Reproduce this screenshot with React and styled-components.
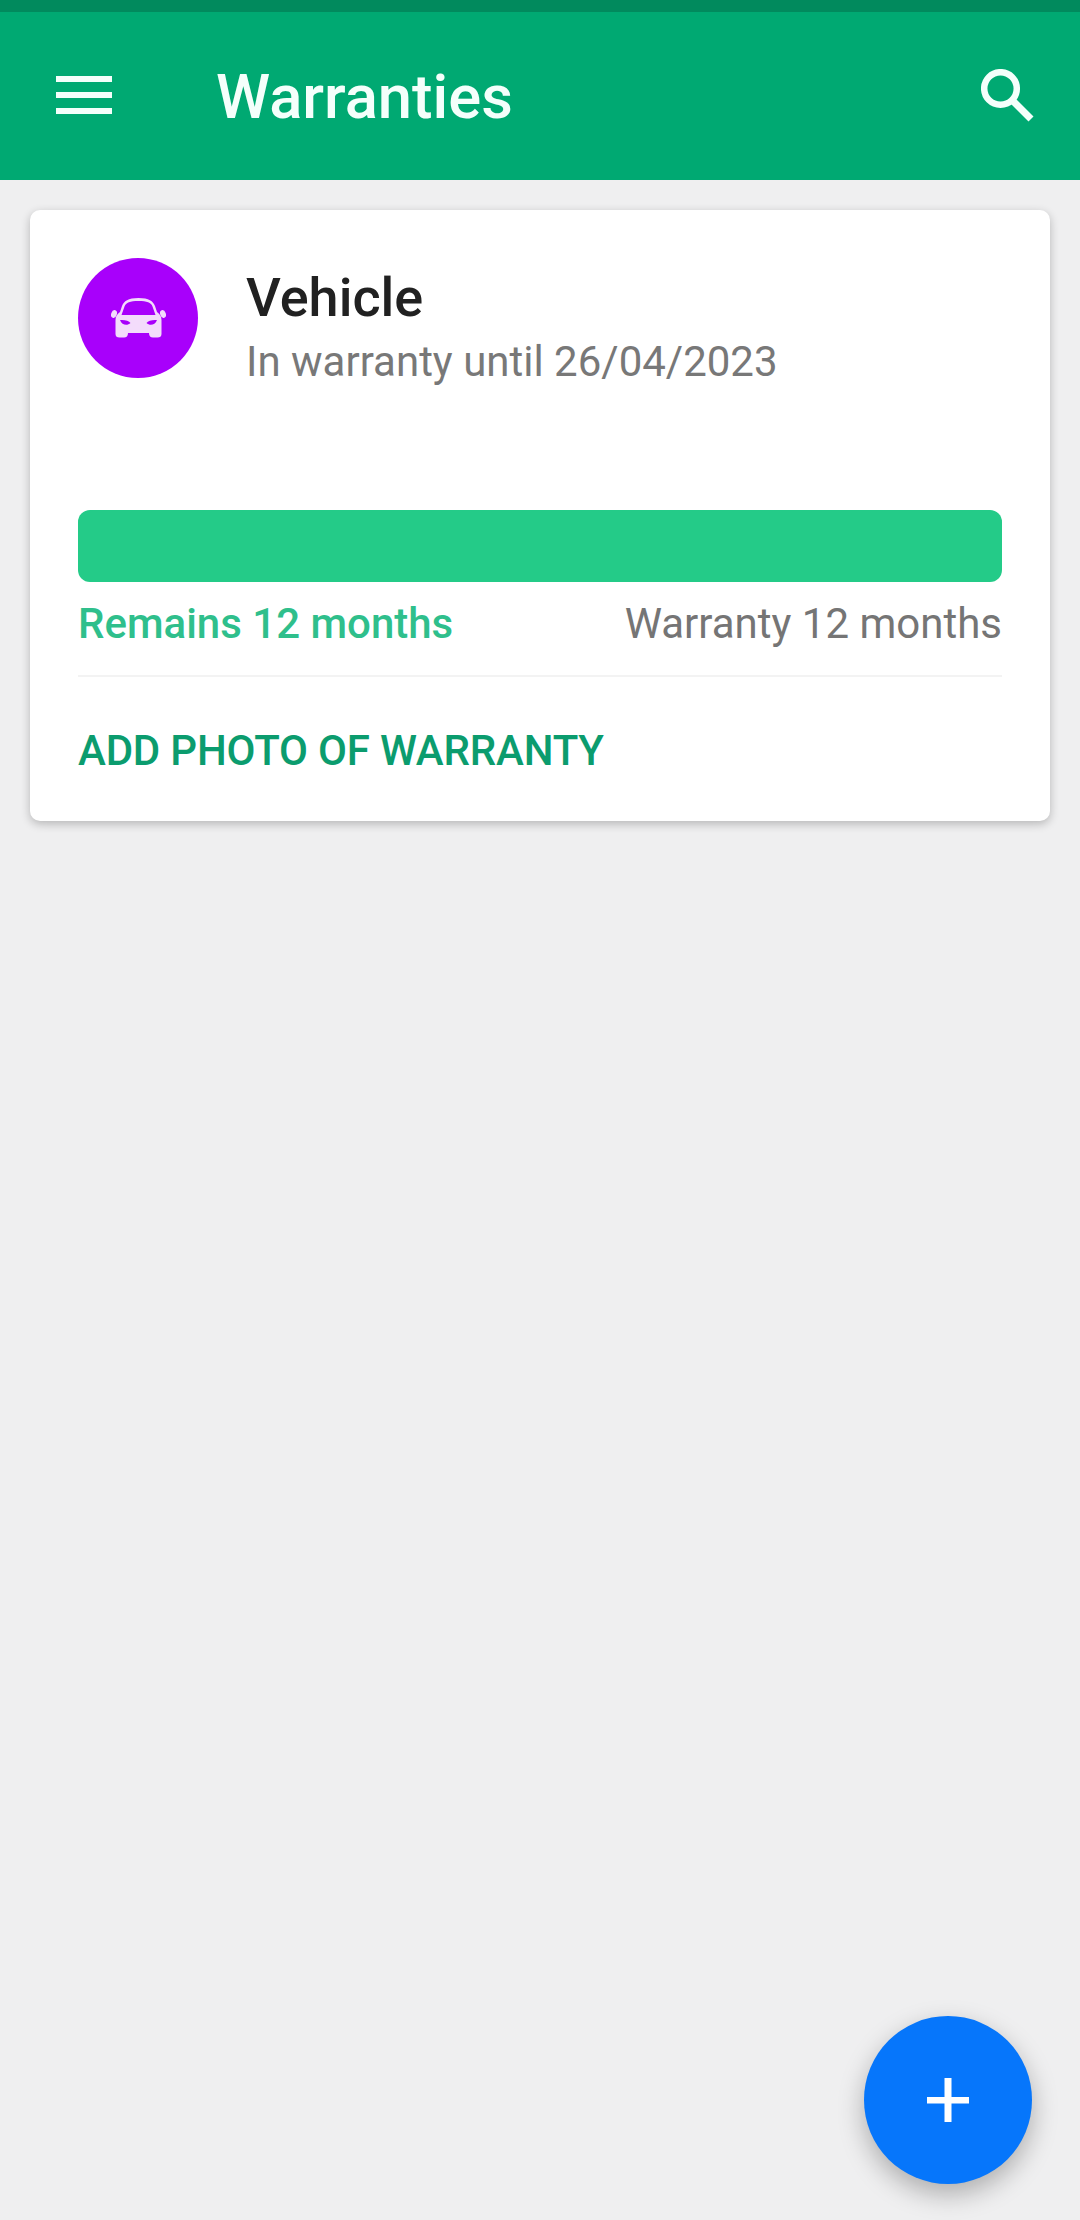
import React from "react";
import styled, { createGlobalStyle } from "styled-components";

const Global = createGlobalStyle`
  html, body { margin: 0; padding: 0; background: #efeff0; }
  body { font-family: Roboto, "Noto Sans", sans-serif; }
`;

const Page = styled.div`
  position: relative;
  width: 1080px;
  height: 2220px;
  overflow: hidden;
  background: #efeff0;
`;

const StatusBar = styled.div`
  height: 12px;
  background: #018a5d;
`;

const AppBar = styled.header`
  display: flex;
  align-items: center;
  height: 168px;
  padding: 0 46px 0 56px;
  background: #00a972;
`;

const Title = styled.h1`
  flex: 1;
  margin: 0 0 -2px 104px;
  font-size: 61.5px;
  font-weight: 500;
  color: #f4fffb;
`;

const Menu = styled.div`
  display: flex;
  flex-direction: column;
  gap: 10px;
  width: 56px;
  margin-top: -2px;
`;

const MenuLine = styled.span`
  height: 6px;
  background: #f4fffb;
`;

const Content = styled.main`
  padding: 30px;
`;

const Card = styled.section`
  height: 611px;
  box-sizing: border-box;
  padding: 48px 48px 0;
  border-radius: 10px;
  background: #fff;
  box-shadow: 0 3px 10px rgba(0, 0, 0, 0.24);
`;

const Head = styled.div`
  display: flex;
  gap: 48px;
  height: 252px;
`;

const Avatar = styled.div`
  display: flex;
  align-items: center;
  justify-content: center;
  width: 120px;
  height: 120px;
  border-radius: 50%;
  background: #a800fb;
`;

const Info = styled.div`
  padding-top: 8px;
`;

const Name = styled.div`
  font-size: 54px;
  line-height: 64px;
  font-weight: 500;
  color: #212121;
`;

const Until = styled.div`
  margin-top: 7px;
  font-size: 42px;
  line-height: 50px;
  color: #787878;
`;

const Bar = styled.div`
  height: 72px;
  border-radius: 12px;
  background: #24cb88;
`;

const Labels = styled.div`
  display: flex;
  justify-content: space-between;
  align-items: center;
  height: 95px;
  border-bottom: 2px solid #f3f3f3;
  padding-bottom: 10px;
  box-sizing: border-box;
  font-size: 42px;
`;

const Remains = styled.span`
  font-weight: 500;
  color: #2fbf8c;
`;

const Total = styled.span`
  color: #757575;
`;

const Action = styled.div`
  margin-top: 49px;
  font-size: 42px;
  line-height: 50px;
  font-weight: 500;
  letter-spacing: -0.2px;
  color: #0b9c6e;
`;

const Fab = styled.button`
  position: absolute;
  left: 864px;
  top: 2016px;
  display: flex;
  align-items: center;
  justify-content: center;
  width: 168px;
  height: 168px;
  padding: 0;
  border: 0;
  border-radius: 50%;
  background: #0676fb;
  box-shadow: 0 10px 26px rgba(0, 0, 0, 0.28);
`;

function SearchIcon() {
  return (
    <svg width="53" height="54" viewBox="0 0 53 54" fill="none" stroke="#f4fffb">
      <circle cx="19.500" cy="19.500" r="16.300" strokeWidth="6.500" />
      <path d="M31 31 L50 50" strokeWidth="7" />
    </svg>
  );
}

function CarIcon() {
  return (
    <svg width="55" height="40" viewBox="0 0 55 40">
      <path
        fill="#f3dcfb"
        d="M4.500 22 C4.500 18 6.500 16 9 14 L11 8 C13 3 17 0 27.500 0 C38 0 42 3 44 8 L46 14 C48.500 16 50.500 18 50.500 22 L50.500 36 C50.500 38.500 49 39.500 46.500 39.500 L42 39.500 C39.500 39.500 38 38 38 35 L17 35 C17 38 15.500 39.500 13 39.500 L8.500 39.500 C6 39.500 4.500 38.500 4.500 36 Z"
      />
      <path fill="#a800fb" d="M10.500 17 L13.500 8.500 C15 4.500 19 3 27.500 3 C36 3 40 4.500 41.500 8.500 L44.500 17 Z" />
      <path fill="#a800fb" d="M9 22 C13 21.500 18 22.500 19.500 25 C16.500 28 11 27.500 9 22 Z M46 22 C42 21.500 37 22.500 35.500 25 C38.500 28 44 27.500 46 22 Z" />
      <ellipse cx="3" cy="16" rx="2.800" ry="4" transform="rotate(20 3 16)" fill="#f3dcfb" />
      <ellipse cx="52" cy="16" rx="2.800" ry="4" transform="rotate(-20 52 16)" fill="#f3dcfb" />
    </svg>
  );
}

function PlusIcon() {
  return (
    <svg width="44" height="44" viewBox="0 0 44 44" fill="#fff">
      <rect x="1" y="19" width="42" height="6.500" />
      <rect x="18.500" y="0" width="7" height="44" />
    </svg>
  );
}

export default function App() {
  return (
    <Page>
      <Global />
      <StatusBar />
      <AppBar>
        <Menu>
          <MenuLine />
          <MenuLine />
          <MenuLine />
        </Menu>
        <Title>Warranties</Title>
        <SearchIcon />
      </AppBar>
      <Content>
        <Card>
          <Head>
            <Avatar>
              <CarIcon />
            </Avatar>
            <Info>
              <Name>Vehicle</Name>
              <Until>In warranty until 26/04/2023</Until>
            </Info>
          </Head>
          <Bar />
          <Labels>
            <Remains>Remains 12 months</Remains>
            <Total>Warranty 12 months</Total>
          </Labels>
          <Action>ADD PHOTO OF WARRANTY</Action>
        </Card>
      </Content>
      <Fab aria-label="Add">
        <PlusIcon />
      </Fab>
    </Page>
  );
}
